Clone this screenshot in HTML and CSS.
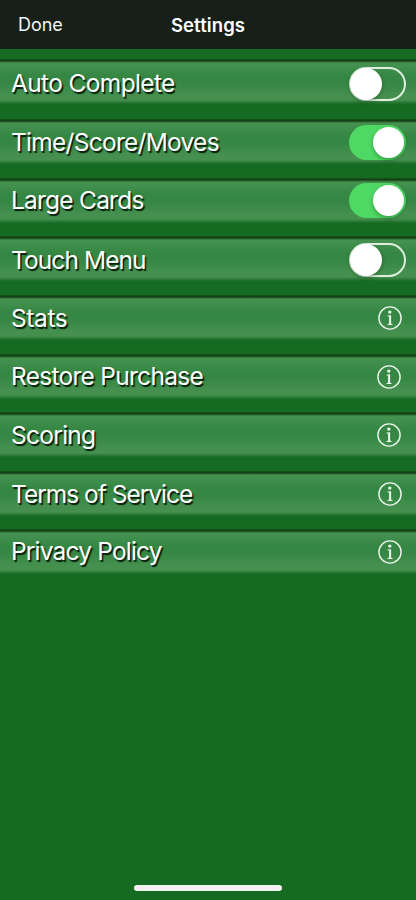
FILE: index.html
```
<!DOCTYPE html>
<html lang="en">
<head>
<meta charset="utf-8">
<title>Settings</title>
<link rel="stylesheet" href="styles.css">
</head>
<body>
<svg width="0" height="0" class="defs" aria-hidden="true">
  <symbol id="info" viewBox="0 0 24 24">
    <circle cx="12" cy="12" r="11.1" fill="none" stroke="currentColor" stroke-width="1.4"/>
    <circle cx="11.8" cy="6.1" r="1.7" fill="currentColor"/>
    <path d="M9.6 9.5l3.5-.3v8.6l1.4.3v.9H9.6v-.9l1.5-.3v-7.2l-1.5-.2z" fill="currentColor"/>
  </symbol>
</svg>
<div class="screen">
  <header class="bar"><span class="done">Done</span><h1 class="title">Settings</h1></header>
  <main class="list">
    <div class="row h60"><div class="panel"><span class="label t1 auto">Auto Complete</span><span class="switch"></span></div></div>
    <div class="row"><div class="panel"><span class="label time">Time/Score/Moves</span><span class="switch on"></span></div></div>
    <div class="row h58"><div class="panel"><span class="label t-1 cards">Large Cards</span><span class="switch on third"></span></div></div>
    <div class="row"><div class="panel"><span class="label t1 touch">Touch Menu</span><span class="switch fourth"></span></div></div>
    <div class="row"><div class="panel"><span class="label stats">Stats</span><svg class="info"><use href="#info"/></svg></div></div>
    <div class="row h58"><div class="panel"><span class="label t-1 restore">Restore Purchase</span><svg class="info left"><use href="#info"/></svg></div></div>
    <div class="row"><div class="panel"><span class="label scoring">Scoring</span><svg class="info left"><use href="#info"/></svg></div></div>
    <div class="row h58"><div class="panel"><span class="label terms">Terms of Service</span><svg class="info"><use href="#info"/></svg></div></div>
    <div class="row"><div class="panel"><span class="label t-1 privacy">Privacy Policy</span><svg class="info"><use href="#info"/></svg></div></div>
  </main>
  <div class="home"></div>
</div>
</body>
</html>
```
FILE: styles.css
```
* { box-sizing: border-box; }
body { margin: 0; font-family: Inter, "Liberation Sans", sans-serif; color: #fff; background: #166b22; }
.defs { display: none; }
.screen { display: flex; flex-direction: column; height: 900px; overflow: hidden; }
.bar {
  display: grid; grid-template-columns: 1fr auto 1fr; align-items: center;
  height: 49px; padding: 0 18px; background: #172018;
}
.done { font-size: 18px; letter-spacing: -.05px; color: #f2f4f2; }
.title { margin: 0; font-size: 18.5px; font-weight: 600; letter-spacing: .1px; }
.list { flex: 1; padding-top: 10px; }
.row { height: 59px; }
.h60 { height: 60px; }
.h58 { height: 58px; }
.panel {
  display: flex; justify-content: space-between; align-items: flex-start;
  height: 45px; padding: 0 10px 0 11px;
  background: linear-gradient(#15591c 0, #164116 1px, #164116 2px, #2b6d31 3px, #45904f 4px, #42904f 7px, #358743 17px, #358743 24px, #45904f 36px, #45904f 41px, #2f7d3b 43px, #166b22 45px);
}
.label {
  margin-top: 8px; line-height: 30px; font-size: 24.5px; white-space: nowrap;
  text-shadow: 1.5px 1.5px 1px #071b09;
}
.t1 { margin-top: 9px; }
.t-1 { margin-top: 7px; }
.auto { letter-spacing: -.64px; }
.time { letter-spacing: -.73px; }
.cards { letter-spacing: -.77px; }
.touch { letter-spacing: -.92px; }
.stats { letter-spacing: -.4px; }
.restore { letter-spacing: -.72px; }
.scoring { letter-spacing: -.72px; }
.terms { letter-spacing: -1px; }
.privacy { letter-spacing: -.82px; }
.switch {
  display: flex; align-items: center; width: 57px; height: 34px; margin-top: 8px;
  border: 2px solid #dfeee1; border-radius: 17px;
}
.switch::before {
  content: ""; flex: none; width: 32px; height: 32px; margin-left: -1px; border-radius: 50%; background: #fff;
  box-shadow: 0 2px 4px rgba(0, 45, 5, .35);
}
.switch.on { height: 35px; margin-top: 6px; border: 0; background: #4ed964; justify-content: flex-end; padding-right: 2px; border-radius: 18px; }
.switch.third { margin-top: 5px; }
.switch.fourth { margin-top: 7px; }
.switch.on::before { width: 31px; height: 31px; margin-left: 0; }
.info { width: 24px; height: 24px; margin: 11px 4.5px 0 0; color: #edf7ee; }
.info.left { margin-right: 5.5px; }
.home { flex: none; align-self: center; width: 148px; height: 5.5px; margin-bottom: 9.5px; border-radius: 3px; background: #f1f1f1; }
```
